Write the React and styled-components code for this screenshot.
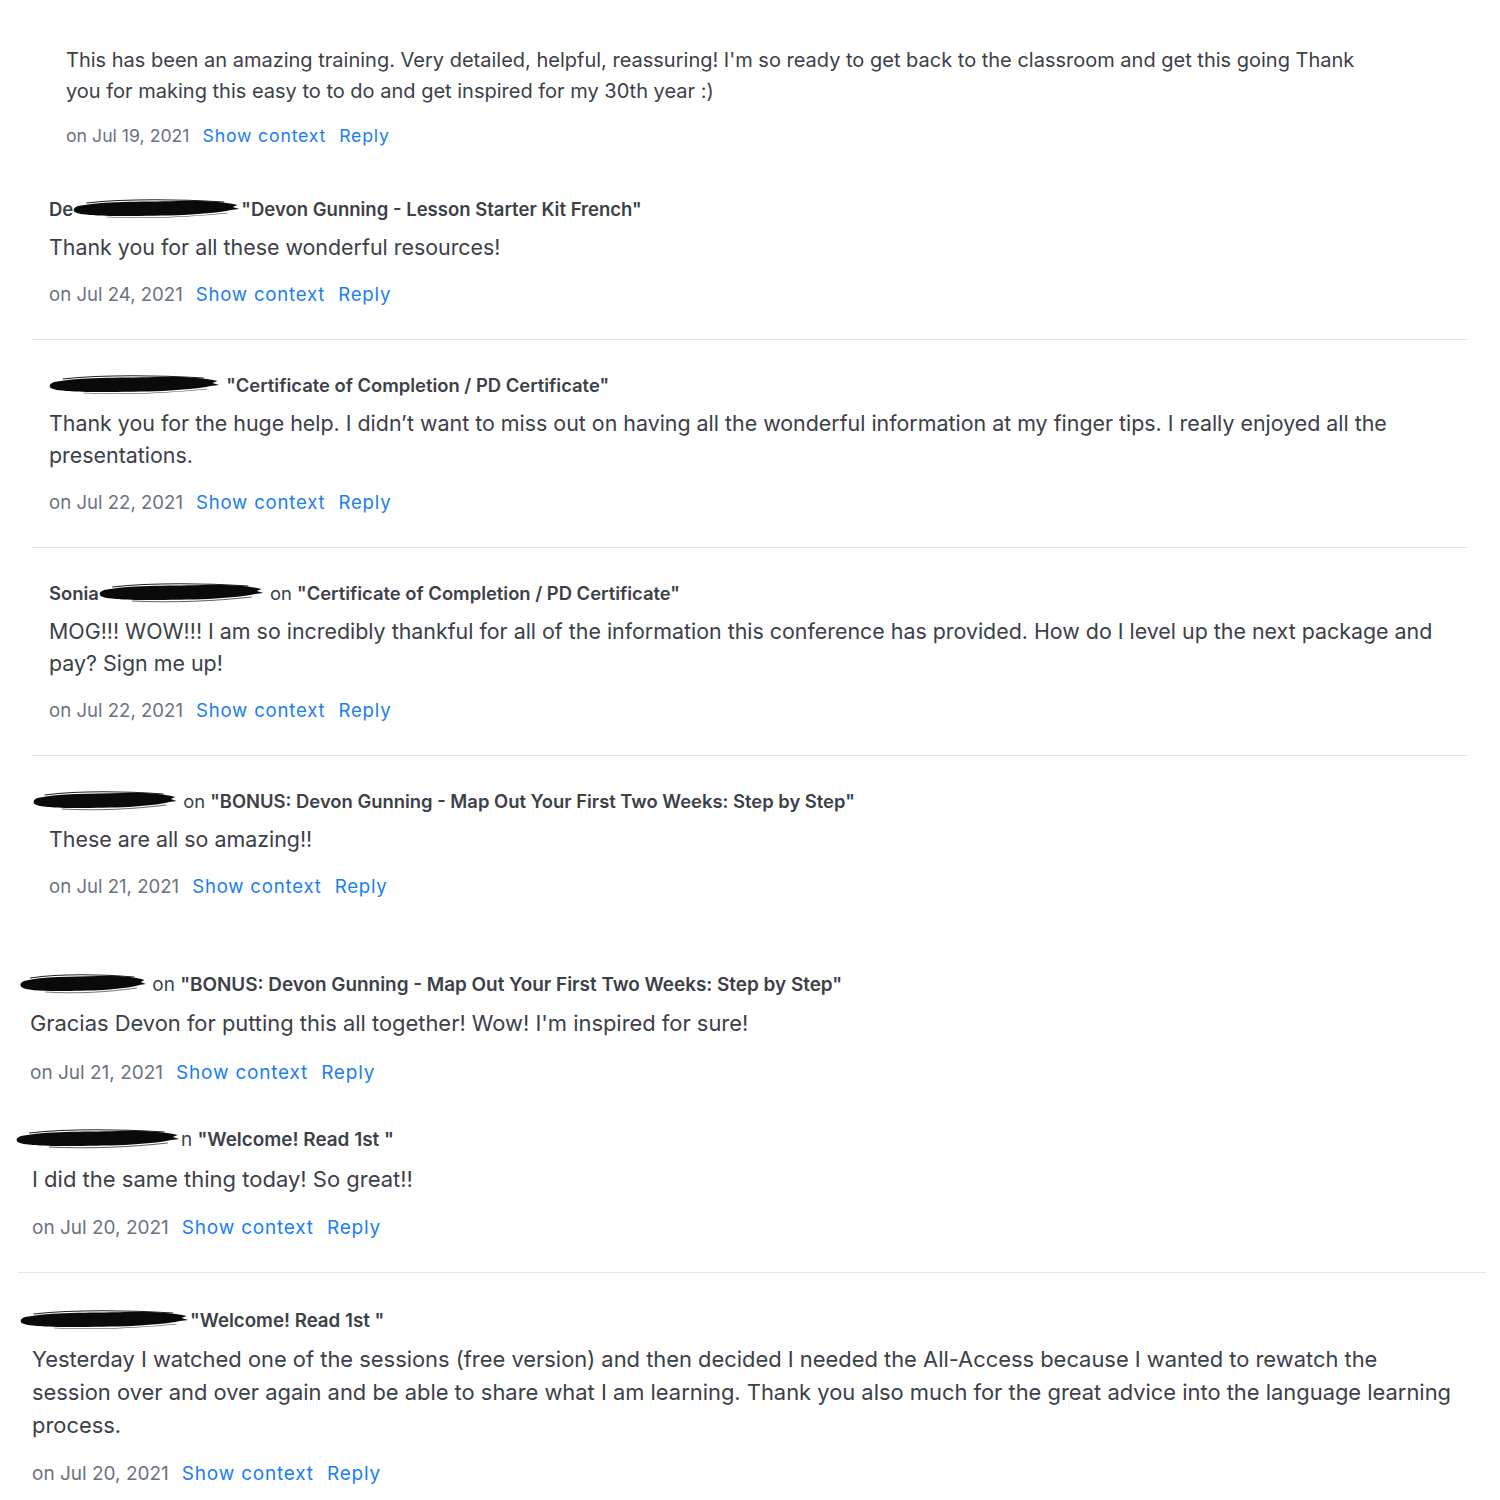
import React from "react";
import styled, { createGlobalStyle } from "styled-components";

const GlobalStyle = createGlobalStyle`
  *, *::before, *::after {
    box-sizing: border-box;
  }
  body {
    margin: 0;
    background: #ffffff;
    font-family: Inter, "Noto Sans", sans-serif;
    color: #3b4049;
  }
`;

const Page = styled.div`
  width: 1500px;
  min-height: 1500px;
  padding-bottom: 20px;
  overflow: hidden;
`;

// one comment: optional title, text, date + links
const Entry = styled.div`
  margin-top: ${(p) => p.$top}px;
  padding-left: ${(p) => p.$left}px;
  width: ${(p) => p.$right}px;
  display: flex;
  flex-direction: column;
`;

const Title = styled.div`
  display: flex;
  align-items: center;
  height: 28px;
  margin-left: ${(p) => p.$shift || 0}px;
  font-size: ${(p) => p.$size || 18.4}px;
  font-weight: 600;
  color: #3b4049;
  white-space: nowrap;
`;

const Plain = styled.span`
  font-weight: 400;
`;

const Body = styled.p`
  margin: ${(p) => p.$gap ?? 8}px 0 0;
  font-size: ${(p) => p.$size || 21.4}px;
  line-height: ${(p) => p.$lh || 32}px;
  color: #3b4049;
`;

const Meta = styled.div`
  display: flex;
  align-items: center;
  gap: 13px;
  height: 28px;
  margin-top: ${(p) => p.$gap ?? 17}px;
  font-size: ${(p) => p.$size || 18.6}px;
  color: #6b7280;
`;

const Link = styled.span`
  color: #1a7ef2;
  letter-spacing: 0.8px;
  cursor: pointer;
`;

const Divider = styled.hr`
  border: none;
  height: 1px;
  background: #e3e6ea;
  margin: ${(p) => p.$top}px 0 0 ${(p) => p.$left}px;
  width: ${(p) => p.$width}px;
`;

const Blot = styled.svg`
  flex: none;
  height: 24px;
`;

const Scribble = ({ width }) => (
  <Blot width={width} viewBox="0 0 100 24" preserveAspectRatio="none">
    <path
      d="M3 9 C 18 4, 40 5, 62 4 C 78 3, 90 5, 98 8 L 95 10 L 99 12 L 94 13 C 80 18, 55 19, 30 19 C 15 19, 4 18, 1 15 C 0 13, 0 11, 3 9 Z"
      fill="#0a0a0a"
    />
    <path d="M8 6 C 30 2, 60 2, 90 5" stroke="#222" strokeWidth="0.8" fill="none" />
    <path d="M20 20 C 45 22, 70 20, 92 16" stroke="#333" strokeWidth="0.6" fill="none" />
  </Blot>
);

const MetaRow = ({ date, ...rest }) => (
  <Meta {...rest}>
    <span>on {date}</span>
    <Link>Show context</Link>
    <Link>Reply</Link>
  </Meta>
);

export default function App() {
  return (
    <Page>
      <GlobalStyle />

      <Entry $top={45} $left={66} $right={1385}>
        <Body $gap={0} $size={20} $lh={31}>
          This has been an amazing training. Very detailed, helpful, reassuring! I'm so ready to get
          back to the classroom and get this going Thank you for making this easy to to do and get
          inspired for my 30th year :)
        </Body>
        <MetaRow date="Jul 19, 2021" $gap={14} $size={17.7} />
      </Entry>

      <Entry $top={46} $left={49} $right={1450}>
        <Title $size={18.5}>
          De
          <Scribble width={168} />
          "Devon Gunning - Lesson Starter Kit French"
        </Title>
        <Body>Thank you for all these wonderful resources!</Body>
        <MetaRow date="Jul 24, 2021" />
      </Entry>
      <Divider $top={31} $left={32} $width={1435} />

      <Entry $top={31} $left={49} $right={1450}>
        <Title>
          <Scribble width={172} />
          <Plain>&nbsp;</Plain>"Certificate of Completion / PD Certificate"
        </Title>
        <Body>
          Thank you for the huge help. I didn’t want to miss out on having all the wonderful
          information at my finger tips. I really enjoyed all the presentations.
        </Body>
        <MetaRow date="Jul 22, 2021" />
      </Entry>
      <Divider $top={31} $left={32} $width={1435} />

      <Entry $top={31} $left={49} $right={1455}>
        <Title>
          Sonia
          <Scribble width={166} />
          <Plain>&nbsp;on&nbsp;</Plain>"Certificate of Completion / PD Certificate"
        </Title>
        <Body>
          MOG!!! WOW!!! I am so incredibly thankful for all of the information this conference has
          provided. How do I level up the next package and pay? Sign me up!
        </Body>
        <MetaRow date="Jul 22, 2021" />
      </Entry>
      <Divider $top={31} $left={32} $width={1435} />

      <Entry $top={31} $left={49} $right={1450}>
        <Title $shift={-16}>
          <Scribble width={145} />
          <Plain>&nbsp;on&nbsp;</Plain>"BONUS: Devon Gunning - Map Out Your First Two Weeks: Step by
          Step"
        </Title>
        <Body>These are all so amazing!!</Body>
        <MetaRow date="Jul 21, 2021" />
      </Entry>

      <Entry $top={70} $left={30} $right={1450}>
        <Title $shift={-10} $size={18.9}>
          <Scribble width={127} />
          <Plain>&nbsp;on&nbsp;</Plain>"BONUS: Devon Gunning - Map Out Your First Two Weeks: Step by
          Step"
        </Title>
        <Body $gap={9} $size={21.9}>
          Gracias Devon for putting this all together! Wow! I'm inspired for sure!
        </Body>
        <MetaRow date="Jul 21, 2021" $gap={19} $size={19} />
      </Entry>

      <Entry $top={39} $left={32} $right={1450}>
        <Title $shift={-16} $size={18.9}>
          <Scribble width={165} />
          <Plain>n&nbsp;</Plain>"Welcome! Read 1st "
        </Title>
        <Body $gap={10} $size={22}>
          I did the same thing today! So great!!
        </Body>
        <MetaRow date="Jul 20, 2021" $gap={18} $size={19} />
      </Entry>
      <Divider $top={31} $left={18} $width={1468} />

      <Entry $top={33} $left={32} $right={1452}>
        <Title $shift={-12} $size={18.7}>
          <Scribble width={170} />
          "Welcome! Read 1st "
        </Title>
        <Body $gap={9} $size={21.9} $lh={33}>
          Yesterday I watched one of the sessions (free version) and then decided I needed the
          All-Access because I wanted to rewatch the session over and over again and be able to share
          what I am learning. Thank you also much for the great advice into the language learning
          process.
        </Body>
        <MetaRow date="Jul 20, 2021" $gap={17} $size={19} />
      </Entry>
    </Page>
  );
}
